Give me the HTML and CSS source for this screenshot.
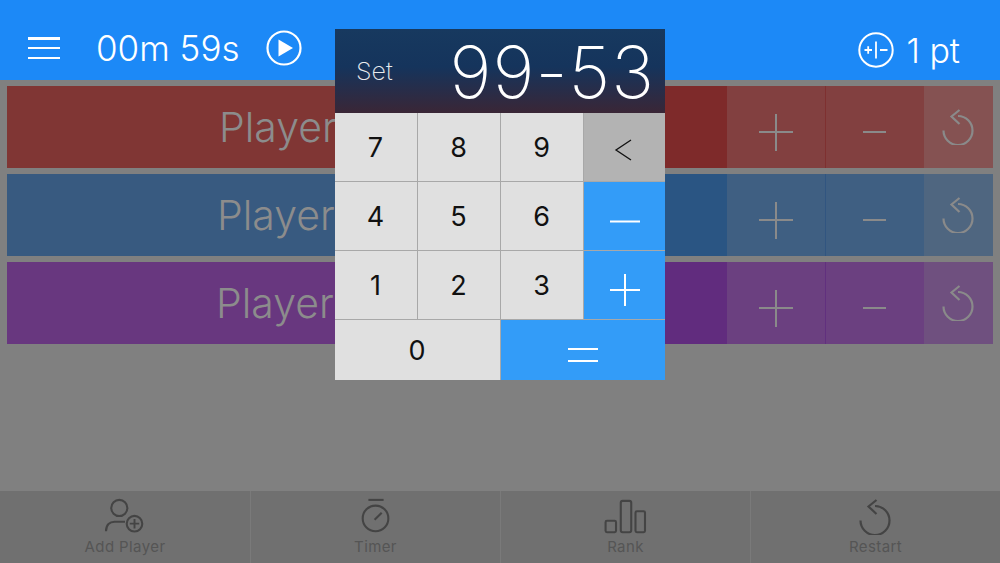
FILE: index.html
```html
<!DOCTYPE html>
<html>
<head>
	<meta charset="utf-8">
	<meta name="viewport" content="width=device-width,initial-scale=1.0">
	<title>Score Keeper</title>

	<link rel="stylesheet" href="styles.css">

</head>
<body>

	<svg class="defs" width="0" height="0">
		<symbol id="undo" viewBox="0 0 32 36">
			<path d="M16 7 A14.500 14.500 0 1 1 1.500 21.500" fill="none" stroke="currentColor" stroke-width="2.2"/>
			<path d="M17.5 1 L9.5 7.5 L17.5 15" fill="none" stroke="currentColor" stroke-width="2.2"/>
		</symbol>
	</svg>

	<!-- TOP BAR -->
	<section class="top-bar">
		<section class="top-left">
			<section class="burger">
				<figure></figure>
				<figure></figure>
				<figure></figure>
			</section>
			<span class="clock">00m 59s</span>
			<svg class="play" width="36" height="36" viewBox="0 0 36 36">
				<circle cx="18" cy="18" r="16.5" fill="none" stroke="#fff" stroke-width="2.2"/>
				<path d="M12.5 9.5 L27 18 L12.5 26.5 Z" fill="#fff"/>
			</svg>
		</section>
		<section class="top-right">
			<svg class="step" width="36" height="36" viewBox="0 0 36 36">
				<circle cx="18" cy="18" r="16.7" fill="none" stroke="#fff" stroke-width="2"/>
				<path d="M6.5 18 H14 M10.2 14.2 V21.8 M18 9.5 V26.5 M22 18 H29.5" fill="none" stroke="#fff" stroke-width="1.8"/>
			</svg>
			<span class="points">1 pt</span>
		</section>
	</section>

	<!-- PLAYER ROWS -->
	<section class="rows">
		<section class="row red">
			<section class="name name-1">Player</section>
			<section class="cell plus"><figure class="h"></figure><figure class="v"></figure></section>
			<section class="cell minus"><figure class="h"></figure></section>
			<section class="cell reset"><svg width="32" height="36"><use href="#undo"/></svg></section>
		</section>
		<section class="row blue">
			<section class="name name-2">Player</section>
			<section class="cell plus"><figure class="h"></figure><figure class="v"></figure></section>
			<section class="cell minus"><figure class="h"></figure></section>
			<section class="cell reset"><svg width="32" height="36"><use href="#undo"/></svg></section>
		</section>
		<section class="row purple">
			<section class="name name-3">Player</section>
			<section class="cell plus"><figure class="h"></figure><figure class="v"></figure></section>
			<section class="cell minus"><figure class="h"></figure></section>
			<section class="cell reset"><svg width="32" height="36"><use href="#undo"/></svg></section>
		</section>
	</section>

	<!-- BOTTOM TABS -->
	<section class="tabs">
		<section class="tab">
			<svg width="46" height="40" viewBox="0 0 46 40">
				<circle cx="17" cy="10.500" r="8.5" fill="none" stroke="#444" stroke-width="2.2"/>
				<path d="M3 35 C3 28 7 25 12 25 H23" fill="none" stroke="#444" stroke-width="2.2"/>
				<circle cx="33" cy="27" r="8.2" fill="none" stroke="#444" stroke-width="2.2"/>
				<path d="M28 27 H38 M33 22 V32" fill="none" stroke="#444" stroke-width="2"/>
			</svg>
			<span>Add Player</span>
		</section>
		<section class="tab">
			<svg width="46" height="40" viewBox="0 0 46 40">
				<path d="M15 2 H31" fill="none" stroke="#444" stroke-width="2.2"/>
				<circle cx="22.500" cy="21.5" r="13.5" fill="none" stroke="#444" stroke-width="2.2"/>
				<path d="M21.500 23 L29 15.500" fill="none" stroke="#444" stroke-width="2.2"/>
			</svg>
			<span>Timer</span>
		</section>
		<section class="tab">
			<svg width="46" height="40" viewBox="0 0 46 40">
				<rect x="1.500" y="24" width="11" height="12" rx="1.5" fill="none" stroke="#444" stroke-width="2.2"/>
				<rect x="17.500" y="3" width="11" height="33" rx="2" fill="none" stroke="#444" stroke-width="2.2"/>
				<rect x="33" y="14" width="10" height="22" rx="1.500" fill="none" stroke="#444" stroke-width="2.2"/>
			</svg>
			<span>Rank</span>
		</section>
		<section class="tab">
			<svg class="undo-big" width="32" height="36" viewBox="0 0 32 36">
				<use href="#undo"/>
			</svg>
			<span>Restart</span>
		</section>
	</section>

	<!-- SCORE KEYPAD -->
	<section class="keypad">
		<section class="display">
			<span class="set">Set</span>
			<span class="score">99-53</span>
		</section>
		<section class="keys">
			<section class="key">7</section>
			<section class="key">8</section>
			<section class="key">9</section>
			<section class="key grey">
				<svg width="20" height="24" viewBox="0 0 20 24"><path d="M17 2 L2 12 L17 22" fill="none" stroke="#111" stroke-width="1.300"/></svg>
			</section>
			<section class="key">4</section>
			<section class="key">5</section>
			<section class="key">6</section>
			<section class="key op">
				<svg width="30" height="30" viewBox="0 0 30 30"><path d="M0 15.500 H30" stroke="#fff" stroke-width="2"/></svg>
			</section>
			<section class="key">1</section>
			<section class="key">2</section>
			<section class="key">3</section>
			<section class="key op">
				<svg width="30" height="34" viewBox="0 0 30 34"><path d="M0 17 H30 M15 1 V33" stroke="#fff" stroke-width="2"/></svg>
			</section>
			<section class="key wide">0</section>
			<section class="key wide op">
				<svg width="30" height="18" viewBox="0 0 30 18"><path d="M0 3 H30 M0 15 H30" stroke="#fff" stroke-width="2"/></svg>
			</section>
		</section>
	</section>

</body>
</html>
```

FILE: styles.css
```css
html, body {
	padding:0;
	margin:0;
	height:100%;
	overflow:hidden;
}

body {
	display:flex;
	flex-direction:column;
	background:#808080;
	font-family:Inter, "Liberation Sans", sans-serif;
}

div, figure, section, span {
	padding:0; margin:0; box-sizing:border-box;
}

.defs { position:absolute; }

/* top bar */
.top-bar {
	height:80px;
	flex:none;
	background:#1c89f7;
	color:#fff;
	display:flex;
	justify-content:space-between;
	align-items:center;
	padding:16px 40px 0 28px;
}

.top-left, .top-right {
	display:flex;
	align-items:center;
}

.burger {
	width:32px;
	height:22px;
	display:flex;
	flex-direction:column;
	justify-content:space-between;
}

.burger figure {
	height:2.5px;
	background:#fff;
}

.clock {
	font-size:35px;
	font-weight:300;
	margin-left:36px;
}

.play { margin-left:26px; }

.top-right { padding-top:4px; }

.points {
	font-size:34px;
	font-weight:300;
	margin-left:12px;
}

/* player rows */
.rows {
	display:flex;
	flex-direction:column;
	gap:6px;
	padding:6px 7px;
	flex:1;
}

.row {
	height:82px;
	display:flex;
}

.name {
	width:720px;
	display:flex;
	align-items:center;
	font-size:41px;
	font-weight:350;
	color:#8c8c8c;
}

.name-1 { padding-left:212px; }
.name-2 { padding-left:210px; }
.name-3 { padding-left:209px; }

.red .name { background:linear-gradient(90deg, #803634 0, #803634 46%, #7e2a2a 46%); }
.blue .name { background:linear-gradient(90deg, #385a80 0, #385a80 46%, #2a5583 46%); }
.purple .name { background:linear-gradient(90deg, #68377f 0, #68377f 46%, #612c7e 46%); }

.red .plus, .red .minus { background:#824040; }
.blue .plus, .blue .minus { background:#3f5f82; }
.purple .plus, .purple .minus { background:#6b4080; }

.red .reset { background:#855252; }
.blue .reset { background:#4f6680; }
.purple .reset { background:#6f507f; }

.red .minus { border-left:1px solid #7e3030; }
.blue .minus { border-left:1px solid #315580; }
.purple .minus { border-left:1px solid #61307e; }

.cell {
	position:relative;
	display:flex;
	align-items:center;
	justify-content:center;
	color:#8a8a8a;
}

.plus { width:98px; }
.minus { width:99px; }
.reset { width:69px; padding-right:2px; }

.cell figure {
	position:absolute;
	background:#8a8a8a;
}

.plus .h { width:34px; height:2px; top:45px; left:32px; }
.plus .v { width:2px; height:37px; top:28px; left:48px; }
.minus .h { width:23px; height:2px; top:45px; left:37px; }

/* bottom tabs */
.tabs {
	height:72px;
	flex:none;
	display:flex;
	background:#707070;
}

.tab {
	width:250px;
	display:flex;
	flex-direction:column;
	align-items:center;
	justify-content:flex-start;
	padding-top:7px;
	border-left:1px solid #7a7a7a;
	color:#555;
	font-size:15px;
	letter-spacing:0.4px;
}

.tab:first-child { border-left:0; }

.tab svg { height:38px; }

.tab span { margin-top:1px; }

.undo-big { color:#444; margin-right:1px; }

/* score keypad */
.keypad {
	position:absolute;
	left:335px;
	top:29px;
	width:330px;
}

.display {
	height:84px;
	background:linear-gradient(180deg, #17395f 0, #15345c 45%, #3a2636 100%);
	color:#fff;
	display:flex;
	align-items:center;
	justify-content:space-between;
	padding:0 10px 0 21px;
}

.set {
	font-size:25px;
	font-weight:200;
	opacity:0.9;
}

.score {
	font-size:72px;
	font-weight:150;
	letter-spacing:1px;
}

.keys {
	display:grid;
	grid-template-columns:82px 82px 82px 81px;
	grid-template-rows:68px 68px 68px 60px;
	gap:1px;
	background:#a8a8a8;
}

.key {
	background:#e0e0e0;
	color:#111;
	font-size:27px;
	font-weight:400;
	display:flex;
	align-items:center;
	justify-content:center;
	padding-right:1px;
}

.wide { grid-column:span 2; }

.grey { background:#b3b3b3; padding-top:6px; }
.op { background:#339cf8; padding-top:9px; padding-right:0; }
```
